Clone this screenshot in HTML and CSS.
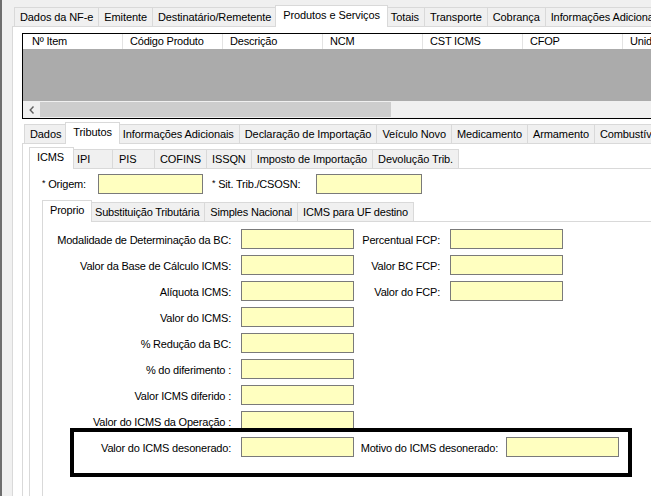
FILE: index.html
```html
<!DOCTYPE html>
<html lang="pt-BR">
<head>
<meta charset="utf-8">
<title>NF-e</title>
<link rel="stylesheet" href="styles.css">
</head>
<body>
<div class="app">
  <div class="strip">
    <div class="tab">Dados da NF-e</div>
    <div class="tab">Emitente</div>
    <div class="tab">Destinatário/Remetente</div>
    <div class="tab sel">Produtos e Serviços</div>
    <div class="tab">Totais</div>
    <div class="tab">Transporte</div>
    <div class="tab">Cobrança</div>
    <div class="tab">Informações Adicionais</div>
  </div>
  <div class="panel p1">
    <div class="grid">
      <div class="ghead">
        <div class="gcol">Nº Item</div>
        <div class="gcol">Código Produto</div>
        <div class="gcol">Descrição</div>
        <div class="gcol">NCM</div>
        <div class="gcol">CST ICMS</div>
        <div class="gcol">CFOP</div>
        <div class="gcol">Unidade</div>
      </div>
      <div class="gbody"></div>
      <div class="hscroll">
        <div class="arrow"><svg width="6" height="8" viewBox="0 0 6 8"><polyline points="4.5,0.5 1.2,4 4.5,7.5" fill="none" stroke="#606060" stroke-width="1.4"/></svg></div>
        <div class="thumb"></div>
      </div>
    </div>

    <div class="strip l2">
      <div class="tab">Dados</div>
      <div class="tab sel">Tributos</div>
      <div class="tab">Informações Adicionais</div>
      <div class="tab">Declaração de Importação</div>
      <div class="tab">Veículo Novo</div>
      <div class="tab">Medicamento</div>
      <div class="tab">Armamento</div>
      <div class="tab">Combustível</div>
    </div>
    <div class="panel p2">
      <div class="strip l3">
        <div class="tab sel">ICMS</div>
        <div class="tab">IPI</div>
        <div class="tab t-wide">PIS</div>
        <div class="tab">COFINS</div>
        <div class="tab">ISSQN</div>
        <div class="tab">Imposto de Importação</div>
        <div class="tab">Devolução Trib.</div>
      </div>
      <div class="panel p3">
        <div class="origem">
          <span class="olbl"><span class="ast">*</span> Origem:</span>
          <span class="inp w-origem"></span>
          <span class="olbl2"><span class="ast">*</span> Sit. Trib./CSOSN:</span>
          <span class="inp w-sit"></span>
        </div>

        <div class="strip l4">
          <div class="tab sel">Proprio</div>
          <div class="tab">Substituição Tributária</div>
          <div class="tab">Simples Nacional</div>
          <div class="tab">ICMS para UF destino</div>
        </div>
        <div class="panel p4">
          <div class="form">
            <span class="lbl">Modalidade de Determinação da BC:</span><span class="inp"></span>
            <span class="lbl">Percentual FCP:</span><span class="inp"></span>

            <span class="lbl">Valor da Base de Cálculo ICMS:</span><span class="inp"></span>
            <span class="lbl">Valor BC FCP:</span><span class="inp"></span>

            <span class="lbl">Alíquota ICMS:</span><span class="inp"></span>
            <span class="lbl">Valor do FCP:</span><span class="inp"></span>

            <span class="lbl">Valor do ICMS:</span><span class="inp"></span>
            <span></span><span></span>

            <span class="lbl">% Redução da BC:</span><span class="inp"></span>
            <span></span><span></span>

            <span class="lbl">% do diferimento :</span><span class="inp"></span>
            <span></span><span></span>

            <span class="lbl">Valor ICMS diferido :</span><span class="inp"></span>
            <span></span><span></span>

            <span class="lbl">Valor do ICMS da Operação :</span><span class="inp"></span>
            <span></span><span></span>
          </div>
          <div class="lastrow">
            <span class="lbl">Valor do ICMS desonerado:</span><span class="inp"></span>
            <span class="lbl motivo">Motivo do ICMS desonerado:</span><span class="inp"></span>
          </div>
          <div class="highlight"></div>
        </div>
      </div>
    </div>
  </div>
</div>
</body>
</html>
```

FILE: styles.css
```css
body {
  margin: 0;
  font-family: "Liberation Sans", Arial, sans-serif;
  font-size: 11px;
  letter-spacing: -0.2px;
  color: #000;
}

.app {
  width: 651px;
  height: 496px;
  box-sizing: border-box;
  overflow: hidden;
  background: #f0f0f0;
  border-left: 2px solid #6e6e6e;
  padding: 5px 0 0 10px;
}

/* tab strips */
.strip {
  display: flex;
  align-items: flex-end;
  height: 21px;
  padding-left: 2px;
  position: relative;
  z-index: 1;
  white-space: nowrap;
}

.tab {
  flex: none;
  height: 19px;
  box-sizing: border-box;
  border: 1px solid #d9d9d9;
  border-bottom: 0;
  background: #f0f0f0;
  padding: 0 5px;
  line-height: 18px;
  letter-spacing: -0.1px;
}

.tab + .tab {
  border-left: 0;
}

.tab.sel {
  height: 22px;
  margin: 0 -2px -1px;
  padding: 0 7px;
  background: #fff;
  border-left: 1px solid #d9d9d9;
  position: relative;
  z-index: 2;
}

.panel {
  border: 1px solid #d9d9d9;
  border-right: 0;
  background: #fff;
  height: 600px;
}

.p1 {
  padding: 6px 0 0 9px;
}

/* data grid */
.grid {
  width: 700px;
  border: 1px solid #000;
}

.ghead {
  display: flex;
  height: 15px;
  background: #fff;
}

.gcol {
  flex: none;
  width: 100px;
  box-sizing: border-box;
  border-right: 1px solid #e3e3e3;
  padding-left: 7px;
  line-height: 15px;
}

.gcol:first-child {
  padding-left: 9px;
}

.gbody {
  height: 52px;
  background: #ababab;
}

.hscroll {
  height: 17px;
  background: #f0f0f0;
  display: flex;
  align-items: center;
}

.arrow {
  width: 17px;
  height: 17px;
  display: flex;
  align-items: center;
  justify-content: center;
}

.thumb {
  width: 351px;
  height: 15px;
  background: #cdcdcd;
}

.l2 {
  margin-top: 3px;
}

.l3 {
  margin-top: 3px;
  padding-left: 8px;
}

.l3 .tab {
  min-width: 41px;
  padding-left: 5px;
}

.l3 .tab.t-wide {
  min-width: 42px;
  padding-left: 6px;
}

.l3 .tab.sel {
  min-width: 45px;
  padding-left: 7px;
}

.p3 {
  margin-left: 6px;
  padding: 5px 0 0 12px;
}

.origem {
  display: flex;
  align-items: center;
  height: 20px;
}

.ast {
  font-size: 9px;
  vertical-align: 2px;
}

.olbl {
  width: 56px;
}

.olbl2 {
  width: 104px;
  margin-left: 9px;
}

.inp {
  display: block;
  box-sizing: border-box;
  height: 20px;
  border: 1px solid #7a7a7a;
  background: #ffffc0;
}

.w-origem {
  width: 105px;
}

.w-sit {
  width: 106px;
}

.l4 {
  margin-top: 6px;
  padding-left: 2px;
}

.l4 .tab {
  letter-spacing: -0.2px;
}

.p4 {
  position: relative;
  padding-top: 7px;
}

.form {
  display: grid;
  grid-template-columns: 188px 113px 76px 113px;
  grid-auto-rows: 20px;
  column-gap: 10px;
  row-gap: 6px;
  align-items: center;
}

.lbl {
  display: flex;
  justify-content: flex-end;
  white-space: nowrap;
  line-height: 20px;
  padding-top: 1px;
}

.lastrow {
  display: flex;
  margin-top: 6px;
  height: 20px;
}

.lastrow .lbl {
  flex: none;
  width: 188px;
  margin-right: 10px;
}

.lastrow .inp {
  width: 113px;
  flex: none;
}

.lastrow .lbl.motivo {
  width: 135px;
  margin: 0 8px 0 9px;
}

.highlight {
  position: absolute;
  left: 27px;
  top: 206px;
  width: 562px;
  height: 49px;
  box-sizing: border-box;
  border: 4px solid #000;
}
```
